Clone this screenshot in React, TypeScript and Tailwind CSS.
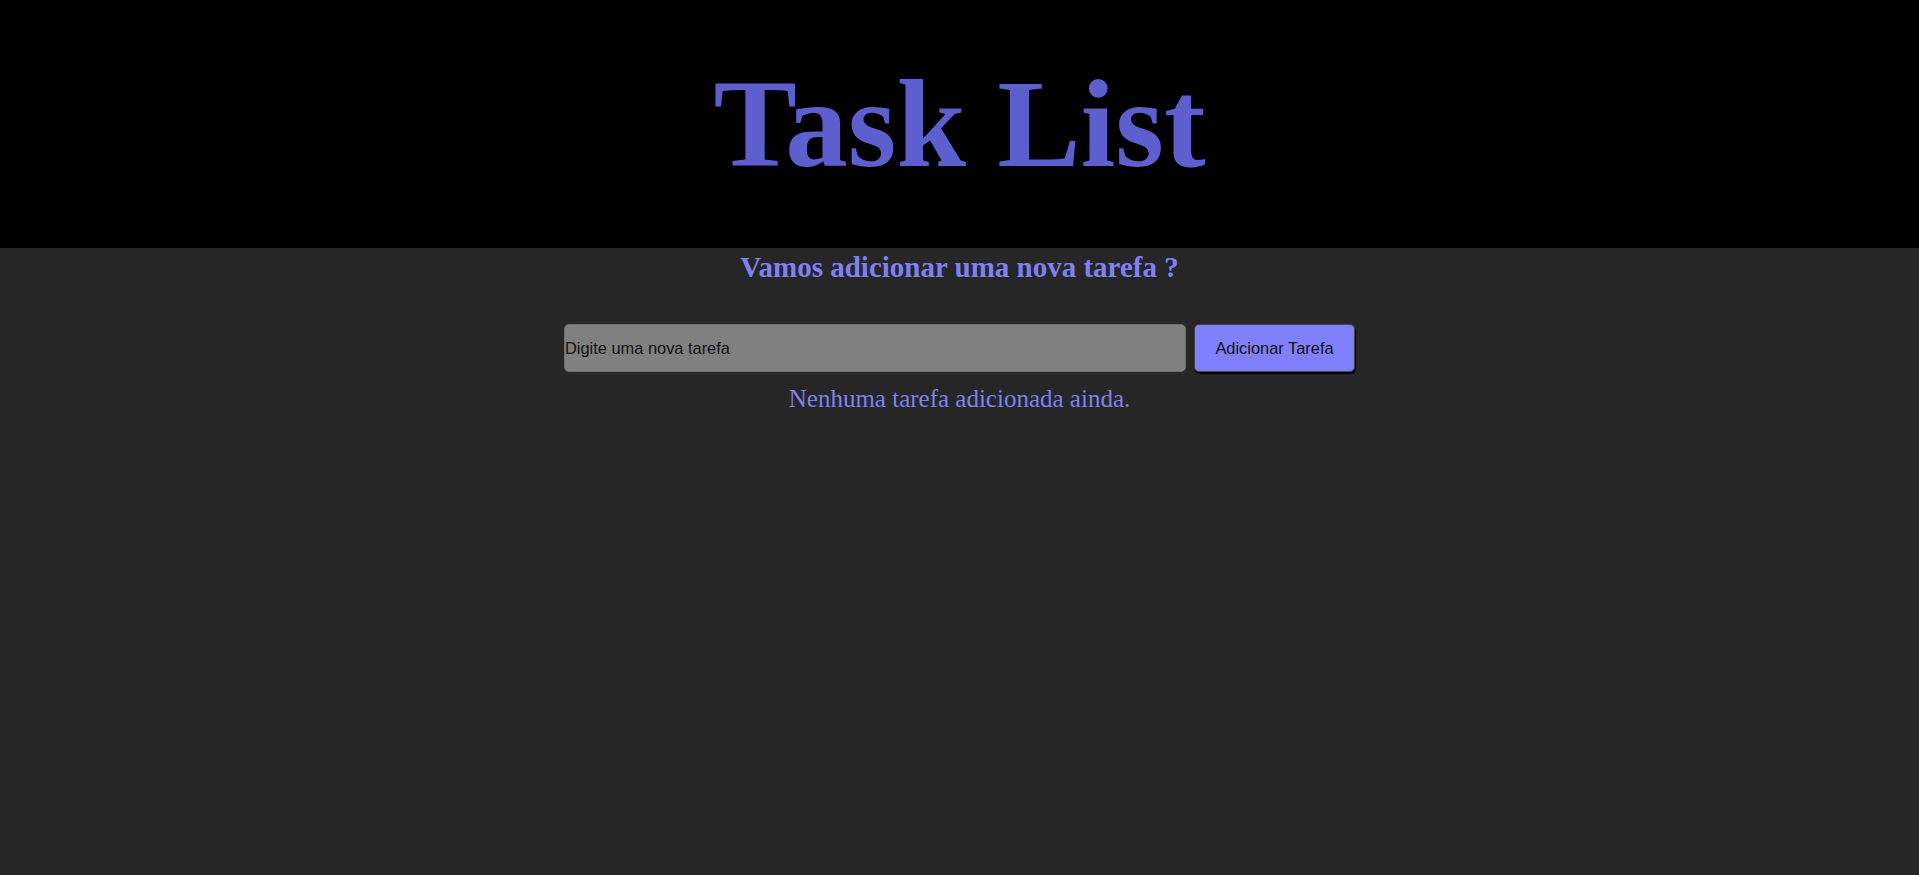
import React, { useState } from 'react';

export default function App() {
  const [tasks, setTasks] = useState<string[]>([]);
  const [text, setText] = useState('');

  const addTask = () => {
    if (!text.trim()) return;
    setTasks([...tasks, text.trim()]);
    setText('');
  };

  return (
    <div className="min-h-[875px] bg-[#262626] font-['Liberation_Serif',serif]">
      <header className="h-[248px] bg-black flex items-center justify-center">
        <h1 className="text-[125px] font-bold leading-[138px] text-[#5d5fce]">Task List</h1>
      </header>

      <main className="flex flex-col items-center">
        <h2 className="mt-[3px] text-[29px] font-bold leading-[32px] text-[#8080f2]">
          Vamos adicionar uma nova tarefa ?
        </h2>

        <div className="mt-[41px] flex gap-[8px]">
          <input
            type="text"
            value={text}
            onChange={(e) => setText(e.target.value)}
            placeholder="Digite uma nova tarefa"
            className="w-[622px] h-[48px] rounded-[5px] border border-[#6e6e6e] bg-[#808080] text-[16.4px] text-[#111] placeholder:text-[#111] font-['Liberation_Sans',sans-serif] outline-none"
          />
          <button
            onClick={addTask}
            className="w-[161px] h-[48px] rounded-[5px] border border-[#444] bg-[#8080ff] text-[16.4px] text-[#111] font-['Liberation_Sans',sans-serif] shadow-[1px_2px_1px_#000]"
          >
            Adicionar Tarefa
          </button>
        </div>

        {tasks.length === 0 ? (
          <p className="mt-[13px] text-[25px] leading-[28px] text-[#8080f2]">Nenhuma tarefa adicionada ainda.</p>
        ) : (
          <ul className="mt-[13px] text-[25px] text-[#8080f2]">
            {tasks.map((t, i) => (
              <li key={i}>{t}</li>
            ))}
          </ul>
        )}
      </main>
    </div>
  );
}
